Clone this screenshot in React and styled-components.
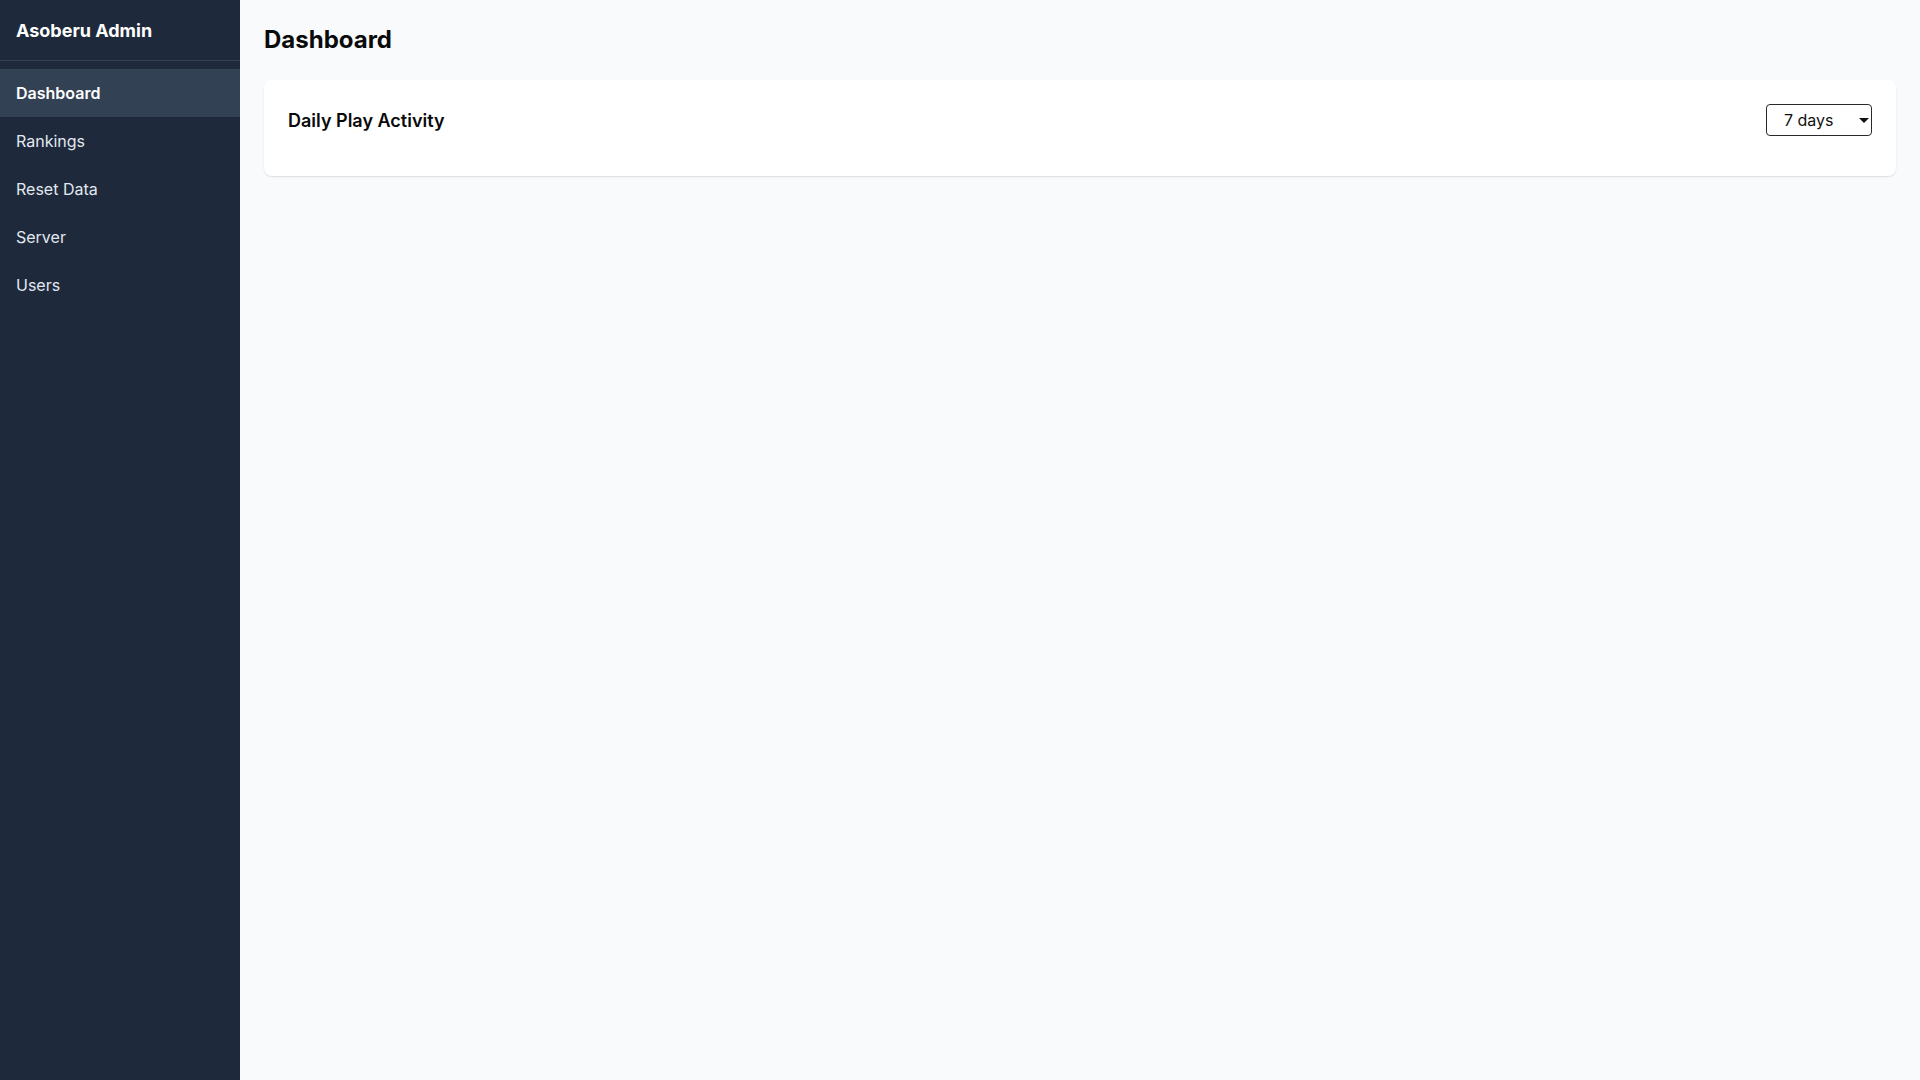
import React from "react";
import styled, { createGlobalStyle } from "styled-components";

const Global = createGlobalStyle`
  html, body { margin: 0; padding: 0; height: 100%; }
  body { font-family: Inter, "Noto Sans", sans-serif; background: #f8fafc; color: #111; }
  #root { height: 100%; }
  * { box-sizing: border-box; }
`;

const Layout = styled.div`
  display: flex;
  min-height: 100vh;
`;

const Sidebar = styled.aside`
  width: 240px;
  flex-shrink: 0;
  background: #1e293b;
  color: #e2e8f0;
  display: flex;
  flex-direction: column;
`;

const Brand = styled.div`
  height: 61px;
  padding: 0 16px;
  display: flex;
  align-items: center;
  font-size: 18px;
  font-weight: 700;
  color: #fff;
  border-bottom: 1px solid #334155;
`;

const Nav = styled.nav`
  display: flex;
  flex-direction: column;
  padding-top: 8px;
`;

const NavItem = styled.a`
  height: 48px;
  display: flex;
  align-items: center;
  padding: 0 16px;
  font-size: 16px;
  color: ${(p) => (p.$active ? "#fff" : "#e2e8f0")};
  font-weight: ${(p) => (p.$active ? 600 : 400)};
  background: ${(p) => (p.$active ? "#334155" : "transparent")};
  text-decoration: none;
  cursor: pointer;
`;

const Main = styled.main`
  flex: 1;
  padding: 24px;
  background: #f8fafc;
`;

const Title = styled.h1`
  margin: 0 0 24px;
  font-size: 24px;
  line-height: 32px;
  font-weight: 700;
  color: #0a0a0a;
`;

const Card = styled.section`
  background: #fff;
  border-radius: 8px;
  padding: 24px;
  box-shadow: 0 1px 2px rgba(0, 0, 0, 0.08), 0 1px 1px rgba(0, 0, 0, 0.04);
`;

const CardHeader = styled.div`
  display: flex;
  align-items: center;
  justify-content: space-between;
  margin-bottom: 16px;
  height: 32px;
`;

const CardTitle = styled.h2`
  margin: 0;
  font-size: 18px;
  font-weight: 600;
  color: #0a0a0a;
`;

const SelectWrap = styled.div`
  position: relative;
  width: 106px;
  height: 32px;
`;

const Select = styled.select`
  appearance: none;
  -webkit-appearance: none;
  width: 100%;
  height: 100%;
  padding: 0 20px 0 17px;
  font-family: Inter, "Noto Sans", sans-serif;
  font-size: 16px;
  color: #111;
  border: 1px solid #2a2a2a;
  border-radius: 4px;
  background: #fff;
  outline: none;
`;

const Caret = styled.span`
  position: absolute;
  right: 3px;
  top: 50%;
  margin-top: -2px;
  width: 0;
  height: 0;
  border-left: 5.5px solid transparent;
  border-right: 5.5px solid transparent;
  border-top: 5px solid #111;
  pointer-events: none;
`;

export default function App() {
  const items = ["Dashboard", "Rankings", "Reset Data", "Server", "Users"];
  return (
    <>
      <Global />
      <Layout>
        <Sidebar>
          <Brand>Asoberu Admin</Brand>
          <Nav>
            {items.map((it, i) => (
              <NavItem key={it} $active={i === 0}>
                {it}
              </NavItem>
            ))}
          </Nav>
        </Sidebar>
        <Main>
          <Title>Dashboard</Title>
          <Card>
            <CardHeader>
              <CardTitle>Daily Play Activity</CardTitle>
              <SelectWrap>
                <Select defaultValue="7">
                  <option value="7">7 days</option>
                  <option value="30">30 days</option>
                  <option value="90">90 days</option>
                </Select>
                <Caret />
              </SelectWrap>
            </CardHeader>
          </Card>
        </Main>
      </Layout>
    </>
  );
}
